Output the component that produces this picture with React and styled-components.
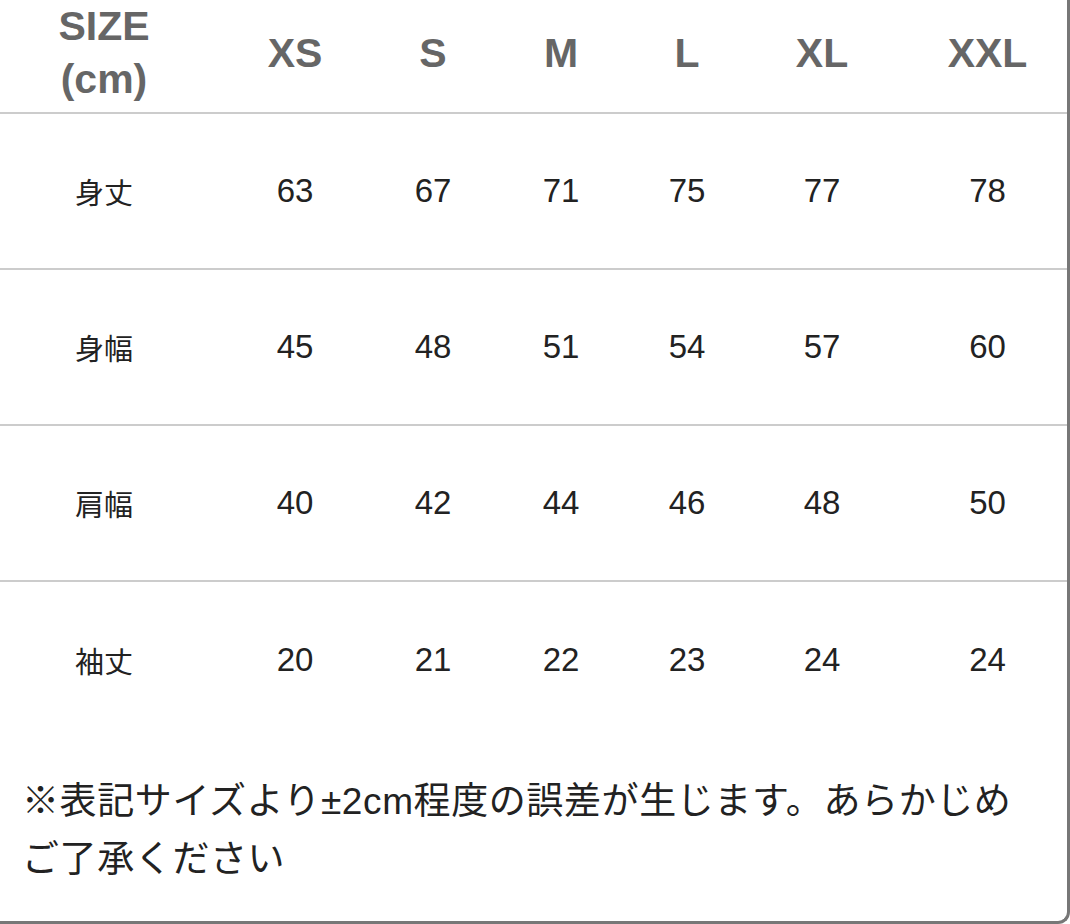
import React from 'react'
import styled, { createGlobalStyle } from 'styled-components'

const GlobalStyle = createGlobalStyle`
  html, body {
    margin: 0;
    padding: 0;
    background: #fff;
  }
  body {
    font-family: "Liberation Sans", "Noto Sans CJK JP", sans-serif;
    color: #222;
  }
`

const Card = styled.div`
  width: 1070px;
  height: 924px;
  box-sizing: border-box;
  background: #fff;
  border-right: 3px solid #777;
  border-bottom: 3px solid #777;
  border-bottom-right-radius: 12px;
  overflow: hidden;
`

const cols = '208px 174px 102px 154px 98px 172px 159px'

const HeadRow = styled.div`
  display: grid;
  grid-template-columns: ${cols};
  height: 114px;
  padding-bottom: 8px;
  box-sizing: border-box;
  border-bottom: 2px solid #ccc;
  align-items: center;
`

const HeadCell = styled.div`
  text-align: center;
  font-weight: bold;
  font-size: 41px;
  line-height: 53px;
  color: #666;
`

const Row = styled.div`
  display: grid;
  grid-template-columns: ${cols};
  height: 156px;
  box-sizing: border-box;
  align-items: center;
  border-bottom: ${p => (p.last ? 'none' : '2px solid #ccc')};
`

const Cell = styled.div`
  text-align: center;
  font-size: ${p => (p.label ? '29px' : '33px')};
  color: #222;
`

const Note = styled.p`
  margin: 0;
  padding: 35px 30px 0 22px;
  font-size: 37px;
  letter-spacing: 0.6px;
  line-height: 58px;
  color: #222;
`

const sizes = ['XS', 'S', 'M', 'L', 'XL', 'XXL']

const rows = [
  { label: '身丈', values: [63, 67, 71, 75, 77, 78] },
  { label: '身幅', values: [45, 48, 51, 54, 57, 60] },
  { label: '肩幅', values: [40, 42, 44, 46, 48, 50] },
  { label: '袖丈', values: [20, 21, 22, 23, 24, 24] },
]

const App = () => {
  return (
    <>
      <GlobalStyle />
      <Card>
        <HeadRow>
          <HeadCell>SIZE<br />(cm)</HeadCell>
          {sizes.map(s => (
            <HeadCell key={s}>{s}</HeadCell>
          ))}
        </HeadRow>
        {rows.map((r, i) => (
          <Row key={r.label} last={i === rows.length - 1}>
            <Cell label>{r.label}</Cell>
            {r.values.map((v, j) => (
              <Cell key={j}>{v}</Cell>
            ))}
          </Row>
        ))}
        <Note>
          ※表記サイズより±2cm程度の誤差が生じます。あらかじめご了承ください
        </Note>
      </Card>
    </>
  )
}

export default App
